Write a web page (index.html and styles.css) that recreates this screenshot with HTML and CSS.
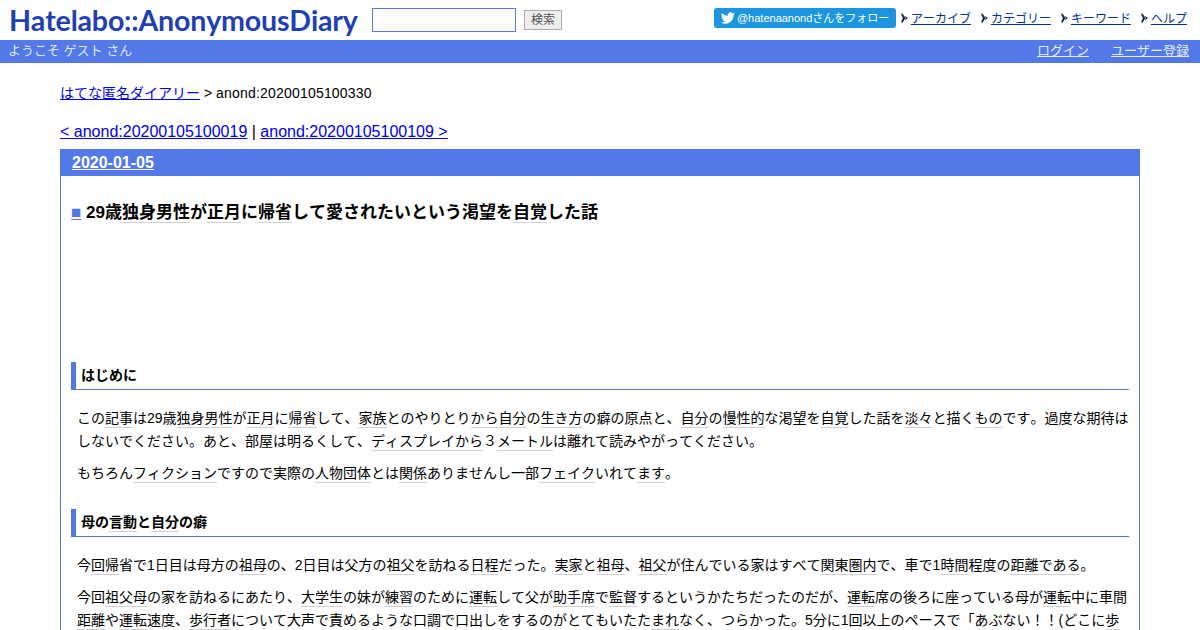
FILE: index.html
```html
<!DOCTYPE html>
<html lang="ja">
<head>
    <meta charset="UTF-8">
    <title>29歳独身男性が正月に帰省して愛されたいという渇望を自覚した話</title>
    <link rel="stylesheet" href="styles.css">
</head>
<body>
    <div class="header">
        <a class="logo" href="#">Hatelabo::AnonymousDiary</a>
        <form class="search">
            <input class="search-input" type="text">
            <button class="search-btn" type="button">検索</button>
        </form>
        <div class="menu">
            <a class="follow-btn" href="#">
                <svg class="follow-icon" viewBox="0 0 24 24"><path d="M23.6 4.6c-.9.4-1.8.7-2.8.8 1-.6 1.8-1.5 2.1-2.7-.9.6-2 1-3.1 1.2A4.9 4.9 0 0 0 11.500 8.400 13.900 13.900 0 0 1 1.600 3.300a4.900 4.900 0 0 0 1.500 6.500c-.8 0-1.500-.2-2.200-.6v.1c0 2.400 1.700 4.400 3.900 4.800-.7.200-1.500.2-2.200.1.600 1.900 2.400 3.300 4.600 3.400A9.800 9.800 0 0 1 0 19.600 13.900 13.900 0 0 0 7.500 21.800c9 0 14-7.500 14-14v-.6c1-.7 1.800-1.600 2.100-2.600z"/></svg>
                <span>@hatenaanondさんをフォロー</span>
            </a>
            <a class="menu-item" href="#"><svg class="menu-arrow" viewBox="0 0 8 10"><path d="M0 0h2l3 5-3 5H0l2-5zM4.500 2.500l3.500 2.500-3.500 2.500 1-2.500z"/></svg><span>アーカイブ</span></a>
            <a class="menu-item" href="#"><svg class="menu-arrow" viewBox="0 0 8 10"><path d="M0 0h2l3 5-3 5H0l2-5zM4.500 2.500l3.500 2.500-3.500 2.500 1-2.500z"/></svg><span>カテゴリー</span></a>
            <a class="menu-item" href="#"><svg class="menu-arrow" viewBox="0 0 8 10"><path d="M0 0h2l3 5-3 5H0l2-5zM4.500 2.500l3.500 2.500-3.500 2.500 1-2.500z"/></svg><span>キーワード</span></a>
            <a class="menu-item" href="#"><svg class="menu-arrow" viewBox="0 0 8 10"><path d="M0 0h2l3 5-3 5H0l2-5zM4.500 2.500l3.500 2.500-3.500 2.500 1-2.500z"/></svg><span>ヘルプ</span></a>
        </div>
    </div>
    <div class="userbar">
        <div>ようこそ ゲスト さん</div>
        <div class="userbar-links">
            <a href="#">ログイン</a>
            <a href="#">ユーザー登録</a>
        </div>
    </div>
    <div class="content">
        <div class="breadcrumb"><a href="#">はてな匿名ダイアリー</a> &gt; <span class="breadcrumb-current">anond:20200105100330</span></div>
        <div class="pager"><a href="#">&lt; anond:20200105100019</a> | <a href="#">anond:20200105100109 &gt;</a></div>
        <div class="day">
            <div class="day-title"><a href="#">2020-01-05</a></div>
            <div class="day-body">
                <h3 class="entry-title"><a class="entry-mark" href="#">■</a> 29歳<a class="kw" href="#">独身男性</a>が<a class="kw" href="#">正月</a>に<a class="kw" href="#">帰省</a>して愛されたいという渇望を<a class="kw" href="#">自覚</a>した話</h3>
                <div class="ad-space"></div>
                <h4 class="section-title">はじめに</h4>
                <p class="text">この<a class="kw" href="#">記事</a>は29歳<a class="kw" href="#">独身男性</a>が<a class="kw" href="#">正月</a>に<a class="kw" href="#">帰省</a>して、<a class="kw" href="#">家族</a>とのやりとり<a class="kw" href="#">から</a><a class="kw" href="#">自分</a>の<a class="kw" href="#">生き方</a>の癖の原点と、<a class="kw" href="#">自分</a>の<a class="kw" href="#">慢性的</a>な渇望を<a class="kw" href="#">自覚</a>した話を<a class="kw" href="#">淡々</a>と描く<a class="kw" href="#">もの</a>です。過度な期待はしないでください。あと、部屋は明るくして、<a class="kw" href="#">ディスプレイから</a>３<a class="kw" href="#">メートル</a>は離れて読みやがってください。</p>
                <p class="text">もちろん<a class="kw" href="#">フィクション</a>ですので実際の<a class="kw" href="#">人物団体</a>とは<a class="kw" href="#">関係</a>ありませんし一部<a class="kw" href="#">フェイク</a>いれて<a class="kw" href="#">ます</a>。</p>
                <h4 class="section-title">母の<a class="kw" href="#">言動</a>と<a class="kw" href="#">自分</a>の癖</h4>
                <p class="text">今<a class="kw" href="#">回帰</a>省で1日目は母方の<a class="kw" href="#">祖母</a>の、2日目は父方の<a class="kw" href="#">祖父</a>を訪ねる<a class="kw" href="#">日程</a>だった。<a class="kw" href="#">実家</a>と<a class="kw" href="#">祖母</a>、<a class="kw" href="#">祖父</a>が住んでいる家はすべて<a class="kw" href="#">関東圏内</a>で、車で1<a class="kw" href="#">時間</a>程度の<a class="kw" href="#">距離である</a>。</p>
                <p class="text">今回<a class="kw" href="#">祖父母</a>の家を訪ねるにあたり、<a class="kw" href="#">大学生</a>の妹が<a class="kw" href="#">練習</a>のために<a class="kw" href="#">運転</a>して父が<a class="kw" href="#">助手席</a>で<a class="kw" href="#">監督</a>するというかたちだったのだが、<a class="kw" href="#">運転</a>席の後ろに座っている母が<a class="kw" href="#">運転</a>中に車間<a class="kw" href="#">距離</a>や<a class="kw" href="#">運転</a>速度、<a class="kw" href="#">歩行者</a>について大声で責めるような口調で口出しをするのがとてもいたた<a class="kw" href="#">まれ</a>なく、つらかった。5分に1回以上のペースで「あぶない！！(どこに<a class="kw" href="#">歩</a></p>
            </div>
        </div>
    </div>
</body>
</html>
```

FILE: styles.css
```css
*{
    box-sizing: border-box;
}
html,body{
    margin: 0;
    padding: 0;
    height: 630px;
    overflow: hidden;
}
body{
    font-family: "Liberation Sans", "Noto Sans CJK JP", sans-serif;
    font-size: 14px;
    font-kerning: none;
    color: #000000;
    background-color: #ffffff;
}
a{
    color: #0000ee;
}
.header{
    display: flex;
    align-items: flex-start;
    height: 40px;
    padding: 8px 13px 0 9px;
}
.logo{
    width: 349px;
    height: 26px;
    font-family: "Lato", sans-serif;
    font-size: 28.6px;
    font-weight: 700;
    line-height: 24px;
    letter-spacing: -0.2px;
    white-space: nowrap;
    text-decoration: none;
    color: #1f3fb4;
}
.search{
    display: flex;
    align-items: center;
    margin-left: 14px;
    height: 24px;
}
.search-input{
    width: 144px;
    height: 24px;
    padding: 0;
    border: 1px solid #5b7bd5;
    background-color: #ffffff;
}
.search-btn{
    width: 38px;
    height: 20px;
    margin-left: 8px;
    padding: 0;
    border: 1px solid #aaaaaa;
    background-color: #eeeeee;
    color: #555555;
    font-family: inherit;
    font-size: 12px;
    line-height: 18px;
}
.menu{
    display: flex;
    align-items: center;
    height: 20px;
    margin-left: auto;
}
.follow-btn{
    display: flex;
    align-items: center;
    width: 182px;
    height: 20px;
    padding-left: 7px;
    background-color: #1b95e0;
    border-radius: 3px;
    color: #ffffff;
    font-size: 11px;
    text-decoration: none;
    white-space: nowrap;
}
.follow-btn span{
    padding-bottom: 2px;
}
.follow-icon{
    width: 14px;
    height: 14px;
    margin-right: 2px;
    fill: #ffffff;
}
.menu-item{
    display: flex;
    align-items: center;
    margin-left: 10px;
    font-size: 12px;
    color: #003399;
    white-space: nowrap;
}
.follow-btn + .menu-item{
    margin-left: 5px;
}
.menu-item span{
    padding-bottom: 2px;
    text-decoration: underline;
}
.menu-arrow{
    width: 7px;
    height: 10px;
    margin-right: 3px;
    fill: #1a2a4a;
}
.userbar{
    display: flex;
    justify-content: space-between;
    align-items: center;
    height: 23px;
    padding: 0 11px 5px 8px;
    background-color: #5279e7;
    color: #dfe6fa;
    font-size: 13px;
}
.userbar-links{
    display: flex;
    gap: 22px;
}
.userbar-links a{
    color: #e6ecfc;
}
.content{
    padding: 0 60px;
}
.breadcrumb{
    margin-top: 21px;
    font-size: 14px;
    line-height: 18px;
}
.breadcrumb-current{
    letter-spacing: 0.2px;
}
.pager{
    margin-top: 20px;
    font-size: 16px;
    line-height: 20px;
}
.day{
    margin-top: 7px;
    border: 1px solid #5b76c9;
    border-top: 0;
}
.day-title{
    height: 27px;
    margin: 0 -1px;
    padding-left: 12px;
    background-color: #5279e7;
    font-size: 16px;
    font-weight: 700;
    line-height: 27px;
}
.day-title a{
    color: #ffffff;
}
.day-body{
    padding: 0 10px;
}
.entry-title{
    margin: 0;
    padding-top: 26px;
    font-size: 17px;
    line-height: 22px;
    font-weight: 700;
}
.entry-mark{
    color: #5279e7;
}
.kw{
    color: #000000;
    text-decoration: underline;
    text-decoration-color: #d0d0d0;
    text-decoration-thickness: 1px;
    text-decoration-skip-ink: none;
    text-underline-offset: 4px;
}
.ad-space{
    height: 138px;
}
.section-title{
    margin: 0;
    height: 28px;
    padding-left: 5px;
    border-left: 5px solid #5279e7;
    border-bottom: 1px solid #5b76c9;
    font-size: 14px;
    font-weight: 700;
    line-height: 27px;
}
.text{
    margin: 9px 0 0;
    padding-left: 6px;
    line-height: 23px;
}
.section-title + .text{
    margin-top: 17px;
}
.text + .section-title{
    margin-top: 24px;
}
```
